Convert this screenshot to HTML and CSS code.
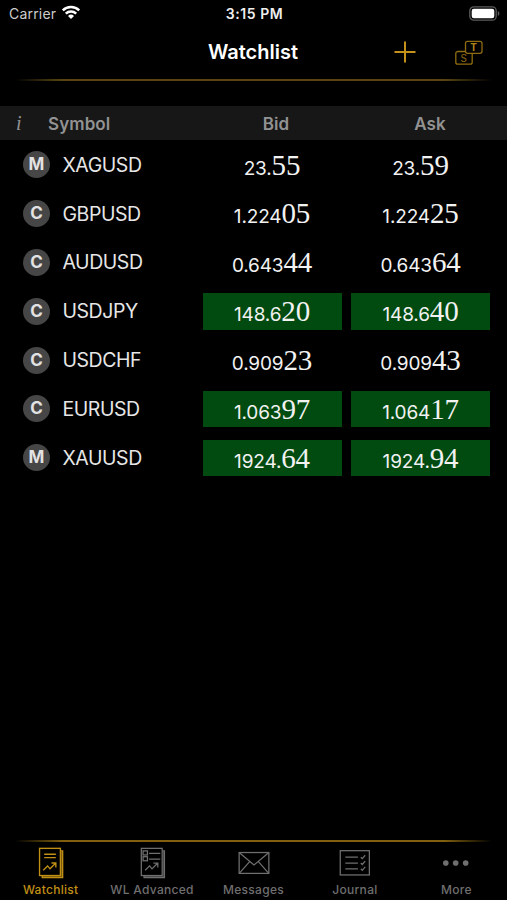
FILE: index.html
```html
<!DOCTYPE html>
<html lang="en">
<head>
    <meta charset="UTF-8">
    <meta name="viewport" content="width=device-width, initial-scale=1.0">
    <title>Watchlist</title>
    <link rel="stylesheet" href="styles.css">
</head>
<body>
    <div class="app">
        <div class="status-bar">
            <div class="carrier">
                <span>Carrier</span>
                <svg class="wifi" width="20" height="16" viewBox="0 0 20 16" fill="none" stroke="#fff" stroke-width="2.5">
                    <path d="M1.8 6.4a11.7 11.7 0 0 1 16.4 0"/>
                    <path d="M4.8 9.7a7.4 7.4 0 0 1 10.4 0"/>
                    <path d="M10 15l-3-3a4.3 4.3 0 0 1 6 0z" fill="#fff" stroke="none"/>
                </svg>
            </div>
            <div class="time">3:15 PM</div>
            <svg class="battery" width="31" height="15" viewBox="0 0 31 15">
                <rect x="0.8" y="0.8" width="26.4" height="13.4" rx="4" fill="none" stroke="#5c5c5c" stroke-width="1.3"/>
                <rect x="2.7" y="2.7" width="22.6" height="9.6" rx="2.2" fill="#fff"/>
                <path d="M28.8 5v5c1-.5 1.6-1.4 1.6-2.5S29.8 5.5 28.8 5z" fill="#5c5c5c"/>
            </svg>
        </div>

        <div class="nav-bar">
            <h1>Watchlist</h1>
            <div class="nav-actions">
                <svg width="22" height="22" viewBox="0 0 22 22" stroke="#c4921a" stroke-width="2">
                    <path d="M11 0.5v21M0.5 11h21"/>
                </svg>
                <svg width="28" height="25" viewBox="0 0 28 25" fill="none" stroke="#8f6c10" stroke-width="1.3">
                    <path d="M10.5 11.5H2.800a2 2 0 0 0-2 2v8.700a2 2 0 0 0 2 2h12.400a2 2 0 0 0 2-2V14"/>
                    <rect x="10.5" y="1.3" width="16.5" height="12" rx="2"/>
                    <text class="key-t" x="18.7" y="11">T</text>
                    <text class="key-s" x="8.7" y="21.7">S</text>
                </svg>
            </div>
        </div>
        <div class="gold-line"></div>

        <div class="table-head">
            <div class="info">i</div>
            <div class="head-symbol">Symbol</div>
            <div class="head-price">Bid</div>
            <div class="head-price">Ask</div>
        </div>

        <div class="quotes">
            <div class="row">
                <div class="badge">M</div>
                <div class="symbol">XAGUSD</div>
                <div class="price">23.<span class="big">55</span></div>
                <div class="price">23.<span class="big">59</span></div>
            </div>
            <div class="row">
                <div class="badge">C</div>
                <div class="symbol">GBPUSD</div>
                <div class="price">1.224<span class="big">05</span></div>
                <div class="price">1.224<span class="big">25</span></div>
            </div>
            <div class="row">
                <div class="badge">C</div>
                <div class="symbol">AUDUSD</div>
                <div class="price">0.643<span class="big">44</span></div>
                <div class="price">0.643<span class="big">64</span></div>
            </div>
            <div class="row">
                <div class="badge">C</div>
                <div class="symbol">USDJPY</div>
                <div class="price up">148.6<span class="big">20</span></div>
                <div class="price up">148.6<span class="big">40</span></div>
            </div>
            <div class="row">
                <div class="badge">C</div>
                <div class="symbol">USDCHF</div>
                <div class="price">0.909<span class="big">23</span></div>
                <div class="price">0.909<span class="big">43</span></div>
            </div>
            <div class="row">
                <div class="badge">C</div>
                <div class="symbol">EURUSD</div>
                <div class="price up">1.063<span class="big">97</span></div>
                <div class="price up">1.064<span class="big">17</span></div>
            </div>
            <div class="row">
                <div class="badge">M</div>
                <div class="symbol">XAUUSD</div>
                <div class="price up">1924.<span class="big">64</span></div>
                <div class="price up">1924.<span class="big">94</span></div>
            </div>
        </div>

        <div class="gold-line bottom"></div>
        <div class="tab-bar">
            <div class="tab active">
                <svg width="32" height="34" viewBox="0 0 32 34" fill="none" stroke="currentColor" stroke-width="1.4">
                    <rect x="4.2" y="1.4" width="21.5" height="28"/>
                    <path d="M26 4h2v27.500H7v-2"/>
                    <path d="M26.900 4.500v26H7" opacity="0.6"/>
                    <path d="M9 7.500h12M9 11h12"/>
                    <path d="M8 24l4.500-4.500 2.500 3 6-6M16.500 16.500H21V21"/>
                </svg>
                <span>Watchlist</span>
            </div>
            <div class="tab">
                <svg width="32" height="34" viewBox="0 0 32 34" fill="none" stroke="currentColor" stroke-width="1.3">
                    <rect x="5" y="1.4" width="21.500" height="28"/>
                    <path d="M26.800 4h2v27.500h-21v-2"/>
                    <path d="M27.700 4.500v26h-20" opacity="0.6"/>
                    <rect x="6.800" y="4" width="4.500" height="4.200"/>
                    <rect x="6.800" y="10" width="4.500" height="4.200"/>
                    <path d="M13 6.500h11.500M13 12.500h11.500"/>
                    <path d="M9 24l4.500-4.500 2.500 3 6-6M17.500 16.500H22V21"/>
                </svg>
                <span>WL Advanced</span>
            </div>
            <div class="tab">
                <svg width="32" height="34" viewBox="0 0 32 34" fill="none" stroke="currentColor" stroke-width="1.3">
                    <rect x="0.7" y="5.7" width="30.6" height="21.500"/>
                    <path d="M1 6l15 12.500L31 6M1 27l10.500-12M31 27l-10.500-12"/>
                </svg>
                <span>Messages</span>
            </div>
            <div class="tab">
                <svg width="32" height="34" viewBox="0 0 32 34" fill="none" stroke="currentColor" stroke-width="1.3">
                    <rect x="0.8" y="3.800" width="30" height="25"/>
                    <path d="M6 10.500h13M6 16.500h13M6 22.500h13"/>
                    <path d="M22 10.500l1.500 1.500 3-3.500M22 16.500l1.500 1.500 3-3.500M22 22.500l1.500 1.500 3-3.500"/>
                </svg>
                <span>Journal</span>
            </div>
            <div class="tab">
                <svg width="32" height="34" viewBox="0 0 32 34" fill="currentColor">
                    <circle cx="5.500" cy="16.500" r="2.900"/>
                    <circle cx="15.700" cy="16.500" r="2.900"/>
                    <circle cx="26" cy="16.500" r="2.900"/>
                </svg>
                <span>More</span>
            </div>
        </div>
    </div>
</body>
</html>
```

FILE: styles.css
```css
body {
    margin: 0;
    background: #000;
    color: #fff;
    font-family: Inter, "Liberation Sans", sans-serif;
}
.app {
    display: flex;
    flex-direction: column;
    width: 507px;
    height: 900px;
    overflow: hidden;
}
.status-bar {
    display: grid;
    grid-template-columns: 1fr auto 1fr;
    align-items: center;
    height: 27px;
    padding: 0 7px 0 9px;
    box-sizing: border-box;
    font-size: 14px;
}
.carrier {
    display: flex;
    align-items: center;
    gap: 5px;
    color: #ccc;
    letter-spacing: 0.2px;
}
.wifi {
    margin-top: -3px;
}
.time {
    color: #eee;
    font-weight: 600;
    letter-spacing: 0.55px;
}
.battery {
    justify-self: end;
}
.nav-bar {
    display: grid;
    grid-template-columns: 1fr auto 1fr;
    align-items: center;
    height: 50px;
    padding: 0 24px 1px 23px;
}
.nav-bar h1 {
    grid-column: 2;
    margin: 0;
    font-size: 20px;
    font-weight: 600;
}
.nav-actions {
    display: flex;
    align-items: center;
    justify-content: flex-end;
    gap: 39px;
}
.key-t,
.key-s {
    stroke: none;
    fill: #8f6c10;
    font-size: 10px;
    text-anchor: middle;
}
.key-t {
    fill: #b08518;
    font-weight: 700;
}
.gold-line {
    flex: none;
    height: 2px;
    margin: 1px 15px 0;
    background: linear-gradient(to right, transparent, #594612 10%, #594612 90%, transparent);
}
.table-head {
    display: flex;
    align-items: center;
    height: 34px;
    margin-top: 25px;
    padding: 1px 17px 0 0;
    box-sizing: border-box;
    background: #171717;
    color: #929292;
    font-size: 17px;
    font-weight: 600;
}
.info {
    width: 48px;
    padding-left: 16px;
    box-sizing: border-box;
    font-family: "Liberation Serif", serif;
    font-size: 20px;
    font-style: italic;
    font-weight: 400;
}
.head-symbol {
    flex: 1;
    letter-spacing: 0.1px;
}
.head-price {
    width: 139px;
    margin-left: 9px;
    padding-left: 7px;
    box-sizing: border-box;
    text-align: center;
}
.head-price:last-child {
    padding-left: 19px;
}
.quotes {
    flex: 1;
    padding-top: 0.4px;
}
.row {
    display: flex;
    align-items: center;
    height: 48.83px;
    padding: 0 17px 0 23px;
}
.badge {
    width: 27px;
    height: 27px;
    border-radius: 50%;
    background: #464646;
    color: #e2e2e2;
    font-size: 17px;
    font-weight: 700;
    line-height: 27px;
    text-align: center;
}
.symbol {
    flex: 1;
    padding-left: 12.5px;
    color: #e6e6e6;
    font-size: 19.5px;
    letter-spacing: -0.45px;
}
.price {
    width: 139px;
    height: 36.5px;
    margin-left: 9.5px;
    color: #f2f2f2;
    font-size: 19px;
    line-height: 36px;
    letter-spacing: -0.15px;
    text-align: center;
}
.up {
    background: #014b10;
}
.big {
    font-family: "Liberation Serif", serif;
    font-size: 29px;
}
.gold-line.bottom {
    background: linear-gradient(to right, transparent, #80600f 10%, #80600f 90%, transparent);
}
.tab-bar {
    display: flex;
    height: 58px;
    padding-top: 1px;
    box-sizing: border-box;
}
.tab {
    display: flex;
    flex: 1 1 0;
    flex-direction: column;
    align-items: center;
    min-width: 0;
    padding-top: 4px;
    color: #6f6f6f;
    font-size: 12px;
    font-weight: 500;
    line-height: 20px;
    letter-spacing: 0.3px;
    white-space: nowrap;
}
.active {
    color: #c08f16;
}
```
